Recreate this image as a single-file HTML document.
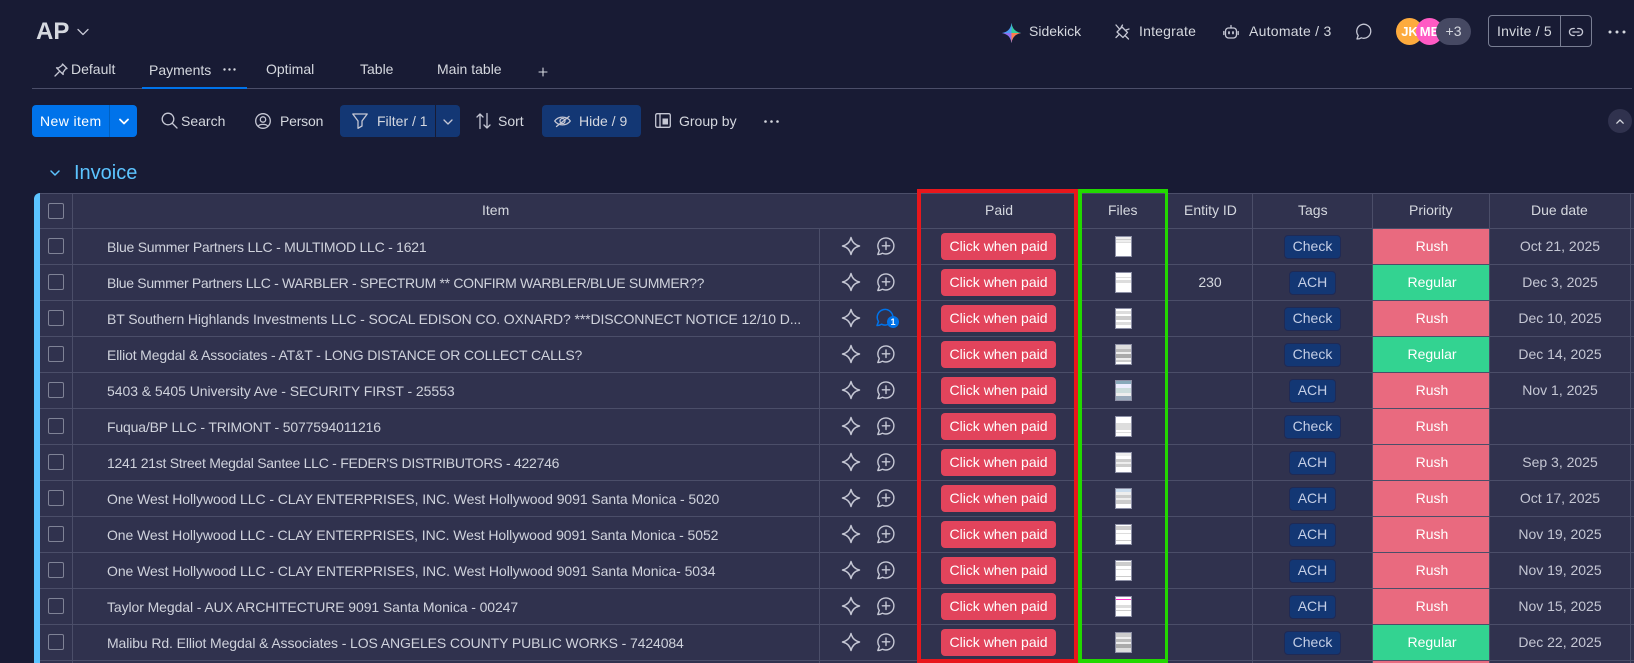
<!DOCTYPE html>
<html lang="en"><head><meta charset="utf-8"><title>AP</title>
<style>
*{box-sizing:border-box}
html,body{margin:0;padding:0;width:1634px;height:663px;overflow:hidden;background:#181b34;font-family:"Liberation Sans",sans-serif;color:#d5d8df}
.a{position:absolute;white-space:nowrap}
.t{position:absolute;white-space:nowrap;font-size:14px;line-height:20px;color:#d5d8df}
svg{position:absolute;overflow:visible;fill:none;stroke:#c5c7d4;stroke-width:1.3;stroke-linecap:round;stroke-linejoin:round}
.bar{position:absolute;left:0;top:0;width:6px;height:470px;background:#5cc4ff}
.h{position:absolute;height:1px;width:1594px;background:#4b4e69}
.v{position:absolute;width:1px;background:#4b4e69}
.row{position:absolute;left:0;width:1634px;height:36px}
.cb{position:absolute;left:48px;top:10px;width:16px;height:16px;border:1px solid #7f8296;border-radius:2px}
.name{position:absolute;left:107px;top:9px;font-size:14px;line-height:20px;color:#cfd2dc;white-space:nowrap}
.paid{position:absolute;left:941px;top:5px;width:115px;height:27px;background:#e2445c;border-radius:4px;color:#fff;font-size:14px;line-height:27px;text-align:center}
.thumb{position:absolute;left:1115px;top:8px;width:17px;height:21px;background:#fff;border:1px solid #8d90a6}
.tag{position:absolute;top:7px;height:24px;background:#133774;border:1px solid #1f2a55;border-radius:4px;color:#c5cfe6;font-size:14px;line-height:21px;text-align:center}
.ach{left:1289px;width:47px}.chk{left:1284px;width:57px}
.pri{position:absolute;left:1373px;top:1px;width:116px;height:35px;padding-left:2px;color:#fff;font-size:14px;line-height:34px;text-align:center}
.rush{background:#e96a7f}.reg{background:#33d391}
.date{position:absolute;left:1490px;width:140px;top:8px;text-align:center;font-size:14px;line-height:20px;color:#c5c7d4}
.eid{position:absolute;left:1168px;width:84px;top:8px;text-align:center;font-size:14px;line-height:20px;color:#d5d8df}
.btn{position:absolute;top:105px;height:32px;background:#133774;border-radius:4px}
</style></head><body>
<svg width="0" height="0" style="position:absolute"><defs>
<symbol id="star" viewBox="0 0 20 20"><path d="M10 1.500Q11.600 8.400 18.500 10 11.600 11.600 10 18.500 8.400 11.600 1.500 10 8.400 8.400 10 1.500Z" fill="none" stroke="#c5c7d4" stroke-width="1.500"/></symbol>
<symbol id="cmt" viewBox="0 0 20 20"><path d="M1.800 18.500 3.300 14.500A8 8 0 1 1 6.500 17.200C5 18.200 3.500 18.500 1.800 18.500Z" fill="none" stroke="#c5c7d4" stroke-width="1.400"/><path d="M10 6V13.500M6.300 9.800H13.700" stroke="#c5c7d4" stroke-width="1.400"/></symbol>
</defs></svg>

<!-- top bar -->
<div class="a" style="left:36px;top:17px;font-size:24px;line-height:30px;font-weight:700;color:#d5d8df">AP</div>
<svg style="left:77px;top:28px" width="12" height="8" viewBox="0 0 12 8"><path d="M1 1.500 6 6.500 11 1.500"/></svg>
<svg style="left:1002px;top:23px" width="19" height="20" viewBox="0 0 19 20"><path d="M9.500 0Q10.500 8.500 19 10 10.500 11.500 9.500 20 8.500 11.500 0 10 8.500 8.500 9.500 0Z" fill="#4b9cf5" stroke="none"/><path d="M9.500 0Q10.500 8.500 19 10H9.500Z" fill="#33cf9b" stroke="none"/><path d="M9.500 10H19Q10.500 11.500 9.500 20Z" fill="#ff7d4d" stroke="none"/><path d="M9.500 10V20Q8.500 11.500 0 10Z" fill="#8f6ff0" stroke="none"/></svg>
<div class="t" style="left:1029px;top:21px">Sidekick</div>
<svg style="left:1115px;top:24px" width="15" height="16" viewBox="0 0 15 16"><path d="M2 8 7 3 12.500 8.500 8 13.500ZM1 1l3.500 4M7.500 1 6 3.500M1 13.500 3.500 11M13.500 15l-3-3M11 6l3-1"/></svg>
<div class="t" style="left:1139px;top:21px;letter-spacing:.2px">Integrate</div>
<svg style="left:1223px;top:24px" width="16" height="16" viewBox="0 0 16 16"><rect x="2.500" y="4" width="11" height="10" rx="3"/><path d="M8 4V1.500M.8 7.500v3M15.200 7.500v3"/><path d="M6 8v1.500M10 8v1.500" stroke-width="1.800"/></svg>
<div class="t" style="left:1249px;top:21px;letter-spacing:.26px">Automate / 3</div>
<svg style="left:1356px;top:23px" width="16" height="17" viewBox="0 0 16 17"><path d="M1 16 2.200 12.500A7 7 0 1 1 5.300 14.800C4 15.700 2.500 16 1 16Z"/></svg>
<div class="a" style="left:1396px;top:18px;width:27px;height:27px;border-radius:50%;background:#fdab3d;color:#fff;font-size:13px;line-height:27px;text-align:center;font-weight:700">JK</div>
<div class="a" style="left:1416px;top:18px;width:27px;height:27px;border-radius:50%;background:#ff5ac4;color:#fff;font-size:13px;line-height:27px;text-align:center;font-weight:700">ME</div>
<div class="a" style="left:1436px;top:18px;width:35px;height:27px;border-radius:14px;background:#464963;color:#d5d8df;font-size:14px;line-height:27px;text-align:center">+3</div>
<div class="a" style="left:1488px;top:15px;width:104px;height:32px;border:1px solid #797e93;border-radius:4px"></div>
<div class="a" style="left:1560px;top:15px;width:1px;height:32px;background:#797e93"></div>
<div class="t" style="left:1497px;top:21px;letter-spacing:.2px">Invite / 5</div>
<svg style="left:1569px;top:27px" width="14" height="10" viewBox="0 0 16 11"><path d="M6 1.500H4.500a4 4 0 0 0 0 8H6M10 1.500h1.500a4 4 0 0 1 0 8H10M4.500 5.500h7" stroke-width="1.500"/></svg>
<svg style="left:1608px;top:30px" width="18" height="4" viewBox="0 0 18 4"><circle cx="2" cy="2" r="1.500" fill="#d5d8df" stroke="none"/><circle cx="9" cy="2" r="1.500" fill="#d5d8df" stroke="none"/><circle cx="16" cy="2" r="1.500" fill="#d5d8df" stroke="none"/></svg>

<!-- tabs -->
<svg style="left:54px;top:63px" width="14" height="14" viewBox="0 0 14 14"><path d="M1 13 5 9M8.500 1 13 5.500 11.500 6 9 9.500 9.200 11.500 2.500 4.800 4.500 5 8 2.500Z"/></svg>
<div class="t" style="left:71px;top:59px">Default</div>
<div class="t" style="left:149px;top:60px">Payments</div>
<svg style="left:223px;top:68px" width="13" height="3" viewBox="0 0 13 3"><circle cx="1.500" cy="1.500" r="1.200" fill="#d5d8df" stroke="none"/><circle cx="6.500" cy="1.500" r="1.200" fill="#d5d8df" stroke="none"/><circle cx="11.500" cy="1.500" r="1.200" fill="#d5d8df" stroke="none"/></svg>
<div class="t" style="left:266px;top:59px">Optimal</div>
<div class="t" style="left:360px;top:59px">Table</div>
<div class="t" style="left:437px;top:59px">Main table</div>
<svg style="left:539px;top:68px" width="8" height="8" viewBox="0 0 8 8"><path d="M4 0V8M0 4H8" stroke="#d5d8df" stroke-width="1.100"/></svg>
<div class="a" style="left:32px;top:88px;width:1600px;height:1px;background:#4b4e69"></div>
<div class="a" style="left:142px;top:87px;width:105px;height:2px;background:#0073ea"></div>

<!-- toolbar -->
<div class="btn" style="left:32px;width:105px;background:#0073ea"></div>
<div class="a" style="left:109px;top:105px;width:1px;height:32px;background:#0060c0"></div>
<div class="t" style="left:40px;top:111px;color:#fff;letter-spacing:.4px">New item</div>
<svg style="left:119px;top:118px" width="10" height="7" viewBox="0 0 10 7"><path d="M1 1.500 5 5.500 9 1.500" stroke="#fff" stroke-width="1.800"/></svg>
<svg style="left:161px;top:112px" width="17" height="17" viewBox="0 0 17 17"><circle cx="7" cy="7" r="5.800"/><path d="M11.500 11.500 16 16"/></svg>
<div class="t" style="left:181px;top:111px">Search</div>
<svg style="left:255px;top:113px" width="16" height="16" viewBox="0 0 16 16"><circle cx="8" cy="8" r="7.300"/><circle cx="8" cy="6.500" r="2.700"/><path d="M3.300 13.200C4.500 10.800 11.500 10.800 12.700 13.200"/></svg>
<div class="t" style="left:280px;top:111px;letter-spacing:-.2px">Person</div>
<div class="btn" style="left:340px;width:120px"></div>
<div class="a" style="left:435px;top:105px;width:1px;height:32px;background:#181b34"></div>
<svg style="left:352px;top:113px" width="16" height="16" viewBox="0 0 16 16"><path d="M.8 1H15.200L10 8V13L6 15.300V8Z"/></svg>
<div class="t" style="left:377px;top:111px">Filter / 1</div>
<svg style="left:443px;top:119px" width="10" height="6" viewBox="0 0 10 6"><path d="M1 1 5 5 9 1"/></svg>
<svg style="left:476px;top:113px" width="15" height="16" viewBox="0 0 15 16"><path d="M4 15.500V1M1 4 4 1 7 4M11 .5V15M8 12l3 3 3-3"/></svg>
<div class="t" style="left:498px;top:111px">Sort</div>
<div class="btn" style="left:542px;width:99px"></div>
<svg style="left:554px;top:115px" width="17" height="12" viewBox="0 0 17 12"><path d="M.7 6C4.500 .8 12.500 .8 16.300 6 12.500 11.200 4.500 11.200 .7 6Z"/><circle cx="8.500" cy="6" r="2.500"/><path d="M2.500 11.500 15 1.500"/></svg>
<div class="t" style="left:579px;top:111px">Hide / 9</div>
<svg style="left:655px;top:113px" width="16" height="15" viewBox="0 0 16 15"><rect x=".7" y=".7" width="14.600" height="13.600" rx="1.500"/><path d="M5 .7V14.300"/><rect x="7.500" y="5.500" width="5.500" height="6" fill="#c5c7d4" stroke="none"/></svg>
<div class="t" style="left:679px;top:111px">Group by</div>
<svg style="left:764px;top:120px" width="15" height="3" viewBox="0 0 15 3"><circle cx="1.500" cy="1.500" r="1.300" fill="#d5d8df" stroke="none"/><circle cx="7.500" cy="1.500" r="1.300" fill="#d5d8df" stroke="none"/><circle cx="13.500" cy="1.500" r="1.300" fill="#d5d8df" stroke="none"/></svg>
<div class="a" style="left:1608px;top:109px;width:24px;height:24px;border-radius:50%;background:#30324e"></div>
<svg style="left:1616px;top:119px" width="8" height="5" viewBox="0 0 8 5"><path d="M.8 4.200 4 1 7.200 4.200" stroke="#d5d8df"/></svg>

<!-- group title -->
<svg style="left:50px;top:170px" width="10" height="6" viewBox="0 0 10 6"><path d="M1 1 5 5 9 1" stroke="#5cc4ff" stroke-width="1.500"/></svg>
<div class="a" style="left:74px;top:161px;font-size:20px;line-height:24px;color:#5cc4ff">Invoice</div>

<!-- table -->
<div class="a" style="left:34px;top:193px;width:1600px;height:470px;background:#30324e;border-top-left-radius:6px;overflow:hidden"><div class="bar"></div></div>
<div class="a" style="left:40px;top:193px;width:1594px;height:1px;background:#4b4e69"></div>
<div class="cb" style="top:203px"></div>
<div class="t" style="left:482px;top:200px">Item</div>
<div class="t" style="left:985px;top:200px">Paid</div>
<div class="t" style="left:1108px;top:200px">Files</div>
<div class="t" style="left:1184px;top:200px">Entity ID</div>
<div class="t" style="left:1298px;top:200px">Tags</div>
<div class="t" style="left:1409px;top:200px">Priority</div>
<div class="t" style="left:1531px;top:200px">Due date</div>

<div class="v" style="left:72px;top:193px;height:470px"></div>
<div class="v" style="left:819px;top:228px;height:435px"></div>
<div class="v" style="left:1252px;top:193px;height:470px"></div>
<div class="v" style="left:1372px;top:193px;height:470px"></div>
<div class="v" style="left:1489px;top:193px;height:470px"></div>
<div class="v" style="left:1630px;top:193px;height:470px"></div>

<div class="row" style="top:228px"><div class="cb"></div><div class="name" style="letter-spacing:-.24px">Blue Summer Partners LLC - MULTIMOD LLC - 1621</div><svg style="left:841px;top:8px" width="20" height="20"><use href="#star"/></svg><svg style="left:876px;top:8px" width="20" height="20"><use href="#cmt"/></svg><div class="paid">Click when paid</div><div class="thumb" style="background:linear-gradient(#eee 0 2px,#ccc 2px 3px,#eee 3px 5px,#ddd 5px 6px,#fff 6px)"></div><div class="tag chk">Check</div><div class="pri rush">Rush</div><div class="date">Oct 21, 2025</div></div>

<div class="row" style="top:264px"><div class="cb"></div><div class="name" style="letter-spacing:-.32px">Blue Summer Partners LLC - WARBLER - SPECTRUM ** CONFIRM WARBLER/BLUE SUMMER??</div><svg style="left:841px;top:8px" width="20" height="20"><use href="#star"/></svg><svg style="left:876px;top:8px" width="20" height="20"><use href="#cmt"/></svg><div class="paid">Click when paid</div><div class="thumb" style="background:linear-gradient(#fff 0 4px,#ddd 4px 5px,#fff 5px 7px,#ddd 7px 10px,#fff 10px)"></div><div class="eid">230</div><div class="tag ach">ACH</div><div class="pri reg">Regular</div><div class="date">Dec 3, 2025</div></div>

<div class="row" style="top:300px"><div class="cb"></div><div class="name" style="letter-spacing:-.11px">BT Southern Highlands Investments LLC - SOCAL EDISON CO. OXNARD? ***DISCONNECT NOTICE 12/10 D...</div><svg style="left:841px;top:8px" width="20" height="20"><use href="#star"/></svg><svg style="left:876px;top:8px" width="18" height="18" viewBox="0 0 18 18"><path d="M1 17.500 2.500 13.500A7.800 7.800 0 1 1 5.500 16.200C4 17.200 2.500 17.500 1 17.500Z" stroke="#0073ea" stroke-width="1.500"/></svg><div class="a" style="left:887px;top:16px;width:12px;height:12px;border-radius:50%;background:#0073ea;color:#fff;font-size:9px;line-height:12px;text-align:center;font-weight:700">1</div><div class="paid">Click when paid</div><div class="thumb" style="background:linear-gradient(#fff 0 2px,#ddd 2px 5px,#fff 5px 7px,#ccc 7px 11px,#fff 11px 13px,#ddd 13px 16px,#fff 16px)"></div><div class="tag chk">Check</div><div class="pri rush">Rush</div><div class="date">Dec 10, 2025</div></div>

<div class="row" style="top:336px"><div class="cb"></div><div class="name" style="letter-spacing:-.15px">Elliot Megdal &amp; Associates - AT&amp;T - LONG DISTANCE OR COLLECT CALLS?</div><svg style="left:841px;top:8px" width="20" height="20"><use href="#star"/></svg><svg style="left:876px;top:8px" width="20" height="20"><use href="#cmt"/></svg><div class="paid">Click when paid</div><div class="thumb" style="background:linear-gradient(#ddd 0 4px,#bbb 4px 7px,#eee 7px 9px,#aaa 9px 13px,#eee 13px 15px,#ccc 15px 17px,#fff 17px)"></div><div class="tag chk">Check</div><div class="pri reg">Regular</div><div class="date">Dec 14, 2025</div></div>

<div class="row" style="top:372px"><div class="cb"></div><div class="name" style="letter-spacing:-.05px">5403 &amp; 5405 University Ave - SECURITY FIRST - 25553</div><svg style="left:841px;top:8px" width="20" height="20"><use href="#star"/></svg><svg style="left:876px;top:8px" width="20" height="20"><use href="#cmt"/></svg><div class="paid">Click when paid</div><div class="thumb" style="background:linear-gradient(#8ab 0 3px,#eef 3px 7px,#cdd 7px 12px,#eee 12px 15px,#9ab 15px 19px)"></div><div class="tag ach">ACH</div><div class="pri rush">Rush</div><div class="date">Nov 1, 2025</div></div>

<div class="row" style="top:408px"><div class="cb"></div><div class="name" style="letter-spacing:-.16px">Fuqua/BP LLC - TRIMONT - 5077594011216</div><svg style="left:841px;top:8px" width="20" height="20"><use href="#star"/></svg><svg style="left:876px;top:8px" width="20" height="20"><use href="#cmt"/></svg><div class="paid">Click when paid</div><div class="thumb" style="background:linear-gradient(#fff 0 6px,#ddd 6px 13px,#fff 13px 15px,#ddd 15px 16px,#fff 16px)"></div><div class="tag chk">Check</div><div class="pri rush">Rush</div></div>

<div class="row" style="top:444px"><div class="cb"></div><div class="name" style="letter-spacing:-.26px">1241 21st Street Megdal Santee LLC - FEDER'S DISTRIBUTORS - 422746</div><svg style="left:841px;top:8px" width="20" height="20"><use href="#star"/></svg><svg style="left:876px;top:8px" width="20" height="20"><use href="#cmt"/></svg><div class="paid">Click when paid</div><div class="thumb" style="background:linear-gradient(#eee 0 3px,#fff 3px 6px,#ccc 6px 9px,#eee 9px 11px,#ccc 11px 14px,#fff 14px)"></div><div class="tag ach">ACH</div><div class="pri rush">Rush</div><div class="date">Sep 3, 2025</div></div>

<div class="row" style="top:480px"><div class="cb"></div><div class="name" style="letter-spacing:-.07px">One West Hollywood LLC - CLAY ENTERPRISES, INC. West Hollywood 9091 Santa Monica - 5020</div><svg style="left:841px;top:8px" width="20" height="20"><use href="#star"/></svg><svg style="left:876px;top:8px" width="20" height="20"><use href="#cmt"/></svg><div class="paid">Click when paid</div><div class="thumb" style="background:linear-gradient(#cde 0 3px,#eee 3px 6px,#ccc 6px 9px,#eee 9px 11px,#ccc 11px 15px,#fff 15px)"></div><div class="tag ach">ACH</div><div class="pri rush">Rush</div><div class="date">Oct 17, 2025</div></div>

<div class="row" style="top:516px"><div class="cb"></div><div class="name" style="letter-spacing:-.08px">One West Hollywood LLC - CLAY ENTERPRISES, INC. West Hollywood 9091 Santa Monica - 5052</div><svg style="left:841px;top:8px" width="20" height="20"><use href="#star"/></svg><svg style="left:876px;top:8px" width="20" height="20"><use href="#cmt"/></svg><div class="paid">Click when paid</div><div class="thumb" style="background:linear-gradient(#fff 0 1px,#ccc 1px 5px,#fff 5px 8px,#ddd 8px 9px,#fff 9px 15px,#ccc 15px 16px,#fff 16px)"></div><div class="tag ach">ACH</div><div class="pri rush">Rush</div><div class="date">Nov 19, 2025</div></div>

<div class="row" style="top:552px"><div class="cb"></div><div class="name" style="letter-spacing:-.07px">One West Hollywood LLC - CLAY ENTERPRISES, INC. West Hollywood 9091 Santa Monica- 5034</div><svg style="left:841px;top:8px" width="20" height="20"><use href="#star"/></svg><svg style="left:876px;top:8px" width="20" height="20"><use href="#cmt"/></svg><div class="paid">Click when paid</div><div class="thumb" style="background:linear-gradient(#fff 0 1px,#ccc 1px 5px,#fff 5px 8px,#ddd 8px 9px,#fff 9px 15px,#ccc 15px 16px,#fff 16px)"></div><div class="tag ach">ACH</div><div class="pri rush">Rush</div><div class="date">Nov 19, 2025</div></div>

<div class="row" style="top:588px"><div class="cb"></div><div class="name" style="letter-spacing:-.09px">Taylor Megdal - AUX ARCHITECTURE 9091 Santa Monica - 00247</div><svg style="left:841px;top:8px" width="20" height="20"><use href="#star"/></svg><svg style="left:876px;top:8px" width="20" height="20"><use href="#cmt"/></svg><div class="paid">Click when paid</div><div class="thumb" style="background:linear-gradient(#fff 0 2px,#f3c 2px 3px,#fff 3px 8px,#ddd 8px 11px,#fff 11px 13px,#ccc 13px 14px,#fff 14px)"></div><div class="tag ach">ACH</div><div class="pri rush">Rush</div><div class="date">Nov 15, 2025</div></div>

<div class="row" style="top:624px"><div class="cb"></div><div class="name" style="letter-spacing:-.11px">Malibu Rd. Elliot Megdal &amp; Associates - LOS ANGELES COUNTY PUBLIC WORKS - 7424084</div><svg style="left:841px;top:8px" width="20" height="20"><use href="#star"/></svg><svg style="left:876px;top:8px" width="20" height="20"><use href="#cmt"/></svg><div class="paid">Click when paid</div><div class="thumb" style="background:linear-gradient(#ccc 0 4px,#eee 4px 6px,#bbb 6px 9px,#eee 9px 11px,#aaa 11px 15px,#ddd 15px)"></div><div class="tag chk">Check</div><div class="pri reg">Regular</div><div class="date">Dec 22, 2025</div></div>

<div class="a" style="left:1373px;top:661px;width:116px;height:2px;background:#e96a7f"></div>

<!-- row lines -->
<div class="h" style="left:40px;top:228px"></div><div class="h" style="left:40px;top:264px"></div><div class="h" style="left:40px;top:300px"></div><div class="h" style="left:40px;top:336px"></div><div class="h" style="left:40px;top:372px"></div><div class="h" style="left:40px;top:408px"></div><div class="h" style="left:40px;top:444px"></div><div class="h" style="left:40px;top:480px"></div><div class="h" style="left:40px;top:516px"></div><div class="h" style="left:40px;top:552px"></div><div class="h" style="left:40px;top:588px"></div><div class="h" style="left:40px;top:624px"></div><div class="h" style="left:40px;top:660px"></div>

<!-- annotation boxes -->
<div class="a" style="left:917px;top:189px;width:161px;height:474px;border:4px solid #e8171c"></div>
<div class="a" style="left:1078px;top:189px;width:90px;height:474px;border:4px solid #22d800;border-right-width:3px"></div>
</body></html>
